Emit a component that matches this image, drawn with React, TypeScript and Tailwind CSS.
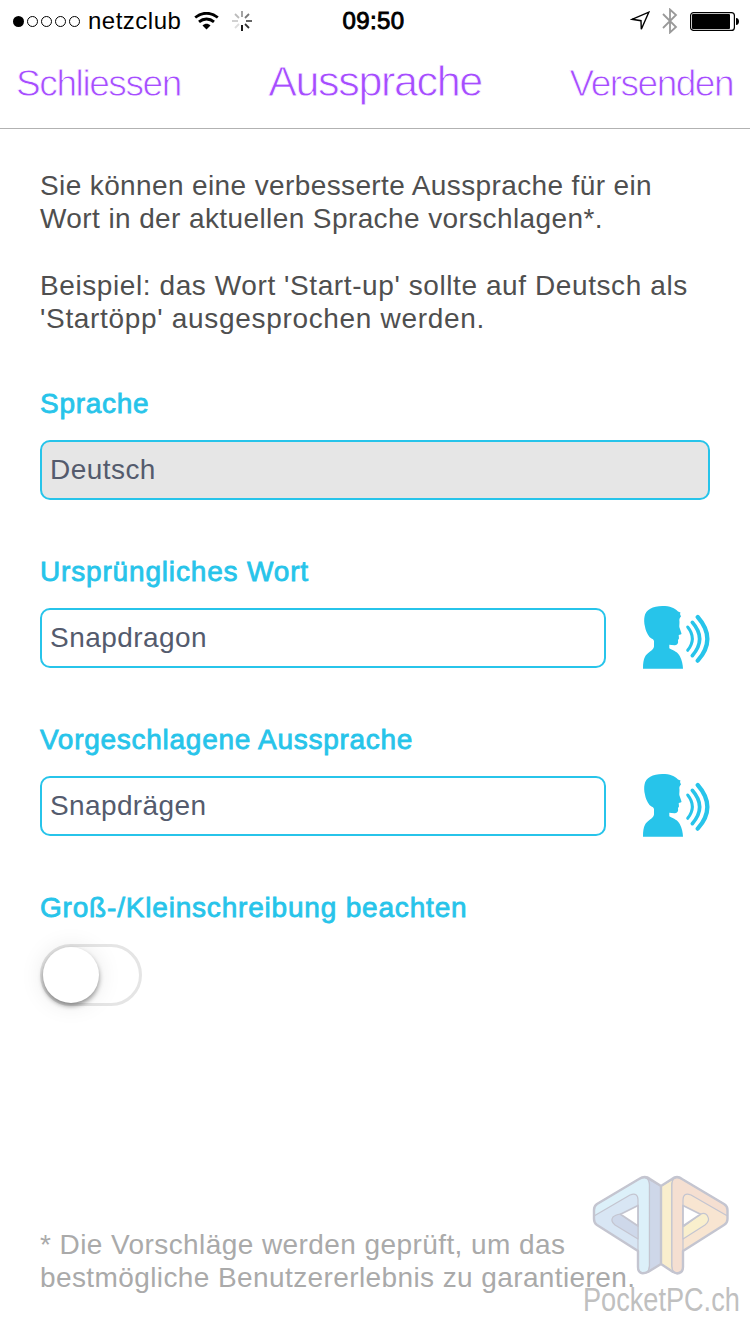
import type { ReactNode } from 'react';

const labelStyle =
  "block h-[34px] whitespace-nowrap text-[28px] leading-[34px] text-[#27c4ea] [-webkit-text-stroke:0.8px_#27c4ea]";

function StatusBar() {
  return (
    <div className="grid h-10 grid-cols-3 items-center pl-3 pr-[11px] text-black">
      <div className="flex items-center">
        <svg className="h-5 w-[70px]" viewBox="0 0 70 20" fill="none" stroke="#000">
          <circle cx="6.5" cy="10.5" r="5.5" fill="#000" stroke="none" />
          <circle cx="20.5" cy="10.5" r="5" />
          <circle cx="34.5" cy="10.5" r="5" />
          <circle cx="48.5" cy="10.5" r="5" />
          <circle cx="62.5" cy="10.5" r="5" />
        </svg>
        <span className="ml-[6px] w-[96px] text-[24px] leading-10 tracking-[0.500px]">netzclub</span>
        <svg className="ml-[10px] h-[18px] w-[26px] shrink-0" viewBox="0 0 26 18" fill="none" stroke="#000">
          <path d="M1.200 5.500C8 -.2 17 -.2 23.800 5.500" strokeWidth="2.800" />
          <path d="M5 9.900C9.500 6 15.500 6 20 9.900" strokeWidth="2.800" />
          <path d="M8.500 13.500C11 11.300 14 11.300 16.500 13.500L12.500 17.500Z" fill="#000" stroke="none" />
        </svg>
        <svg className="ml-3 h-5 w-5 shrink-0" viewBox="0 0 20 20" fill="none" strokeWidth="1.800">
          <path d="M10 0v6" stroke="#999" />
          <path d="M17 3l-4 4" stroke="#777" />
          <path d="M20 10h-6" stroke="#555" />
          <path d="M17 17l-4-4" stroke="#333" />
          <path d="M10 20v-6" stroke="#000" />
          <path d="M3 17l4-4" stroke="#ddd" />
          <path d="M0 10h6" stroke="#ccc" />
          <path d="M3 3l4 4" stroke="#bbb" />
        </svg>
      </div>
      <div className="pr-1 pt-px text-center text-[24px] leading-10 tracking-[0.4px] [-webkit-text-stroke:0.9px_#000]">09:50</div>
      <div className="flex items-center justify-end">
        <svg className="h-5 w-5" viewBox="0 0 20 20" fill="none" stroke="#000" strokeWidth="1.400">
          <path d="M18.800 1.200L11.300 18.200L11 9.700L2 8.300Z" />
        </svg>
        <svg className="ml-3 h-[26px] w-4" viewBox="0 0 16 26" fill="none" stroke="#999" strokeWidth="1.800">
          <path d="M1 6L14 19L8 24.500V1.500L14 7L1 20" />
        </svg>
        <svg className="ml-3 h-5 w-[49px]" viewBox="0 0 49 20">
          <rect x="0.600" y="1.600" width="43.800" height="17.800" rx="3" fill="none" stroke="#000" strokeWidth="1.200" />
          <rect x="2" y="3" width="38" height="15" rx="1" />
          <path d="M46 7c4 0 4 7 0 7z" />
        </svg>
      </div>
    </div>
  );
}

function SpeakIcon() {
  return (
    <svg className="h-[66px] w-[70px] shrink-0" viewBox="0 0 70 66" fill="none" stroke="#27c4ea" strokeLinecap="round">
      <path
        d="M3 64.700C3 59 3.500 55.500 5 52.700C7 48.500 13.500 46.500 14 42.500V37C13.500 34.500 10.500 34.500 9.300 32.700C7 29.500 5.500 26 5 22.700C4 19 4 15 4.500 12.700C5.500 5.500 13 2 22.300 2C30 2 35 4 38 7.500L40.500 8.500L40 10L41 12.500C40 13.500 39.500 14.500 39.300 16C39.800 18.500 39.200 20.500 39.300 23L41.500 29.500C41.500 30.500 40 30.800 38.700 31L39 34.500L38 36C38.500 39.500 37.500 41 35 41.200C33 41.300 31 40.700 29.300 40.700V44.300C34 47 38 48 40 52.500C42 56.500 42.800 60.500 43 64.700Z"
        fill="#27c4ea"
        stroke="none"
      />
      <path d="M47.700 23Q57 34.700 47.700 46.300" strokeWidth="3" />
      <path d="M52.300 18.300Q67 35 52.300 51.700" strokeWidth="3.600" />
      <path d="M57.700 13Q77 35 57.700 56.700" strokeWidth="4.200" />
    </svg>
  );
}

type FieldProps = {
  label: string;
  value: string;
  labelTracking: string;
  valueTracking: string;
  disabled?: boolean;
};

function Field({ label, value, labelTracking, valueTracking, disabled }: FieldProps) {
  return (
    <div className="h-[168px]">
      <label className={`${labelStyle} ${labelTracking}`}>{label}</label>
      <div className="mt-[19px] flex h-[60px] items-center">
        <div
          className={`flex h-[60px] flex-1 items-center rounded-[10px] border-2 border-[#27c4ea] pl-2 text-[28px] text-[#545b6d] ${
            disabled ? 'bg-[#e6e6e6]' : 'bg-white'
          }`}
        >
          <span className={valueTracking}>{value}</span>
        </div>
        {!disabled && (
          <button className="ml-[34px] -mt-[2px]" aria-label="Anhören">
            <SpeakIcon />
          </button>
        )}
      </div>
    </div>
  );
}

function Line({ children, className }: { children: ReactNode; className: string }) {
  return <span className={`block whitespace-nowrap ${className}`}>{children}</span>;
}

function Watermark() {
  return (
    <div className="absolute left-[583px] top-[1174px] w-[160px]">
      <svg className="ml-[9px] h-[102px] w-[138px]" viewBox="0 0 138 102" strokeLinejoin="round" strokeWidth="1.200" stroke="#c4c5d0">
        {/* left half */}
        <path d="M46 20V5L5 30Q2 32 2 36V45Q2 49 5 51L46 77Z" fill="#d8e6f4" stroke="none" />
        <path d="M2 42V36Q2 32 5 30L47 5Q57 1 57.500 10V92Q57 99 51.500 99Q46 98 46 93V26Q46 18 38 21Z" fill="#dcf0f9" />
        <path d="M28.500 40L46 52V65L23 51Q18 47 21 43Q23 41 28.500 40Z" fill="#ced8ea" />
        <path d="M54 4L69 12V90L54 99Q57.500 97 57.500 92V11Q57.500 6 54 4Z" fill="#ced7e9" />
        {/* right half */}
        <path d="M91 20V5L132 30Q135.500 32 135.500 36V45Q135.500 49 132 51L91 77Z" fill="#f8e5d1" stroke="none" />
        <path d="M135.500 42V36Q135.500 32 132 30L90 5Q80 1 79.700 10V92Q80 99 85.500 99Q91 98 91 93V26Q91 18 99 21Z" fill="#f5dfd1" />
        <path d="M91 53L108.500 40Q114 38 116 43Q118 47 113 51L91 65Z" fill="#f9efcd" />
        <path d="M83 4L69 12V90L83 99Q79.700 97 79.700 92V11Q79.700 6 83 4Z" fill="#f9eecd" />
        <path d="M46 31.500L28.500 40.300L46 52ZM91 31.500L108.500 40.300L91 52Z" fill="#fff" strokeWidth="1.800" />
        <path
          d="M2 36Q2 32 5 30L47 5Q53 1 58 5L69 12L80 5Q85 1 90 5L132 30Q135.500 32 135.500 36V45Q135.500 49 132 51L91 77V93Q91 99 85 99.500L81 98L69 90L56 98Q46 102 46 93V77L5 51Q2 49 2 45ZM69 12V90"
          fill="none"
          strokeWidth="2.400"
        />
      </svg>
      <div className="h-10 origin-left scale-x-[0.822] whitespace-nowrap text-[33px] leading-[48px] text-[#c0c0c0]">PocketPC.ch</div>
    </div>
  );
}

export default function App() {
  return (
    <div className="relative h-[1334px] w-[750px] overflow-hidden bg-white font-['Liberation_Sans',Arial,sans-serif]">
      <StatusBar />
      <header className="grid h-[89px] grid-cols-[1fr_auto_1fr] items-center border-b border-[#b2b2b2] px-4 text-[#a64dff] [-webkit-text-stroke:0.8px_#fff]">
        <button className="whitespace-nowrap text-left text-[37px] leading-[86px] tracking-[-1.400px]">Schliessen</button>
        <h1 className="-mt-1.5 whitespace-nowrap text-[43px] leading-[82px] tracking-[-1.350px]">Aussprache</h1>
        <button className="whitespace-nowrap pr-px text-right text-[37px] leading-[86px] tracking-[-1.500px]">Versenden</button>
      </header>

      <main className="px-10 pt-[40px]">
        <p className="text-[28px] leading-[33px] text-[#4f4f4f]">
          <Line className="tracking-[0.380px]">Sie können eine verbesserte Aussprache für ein</Line>
          <Line className="tracking-[0.400px]">Wort in der aktuellen Sprache vorschlagen*.</Line>
        </p>
        <p className="mt-[34px] text-[28px] leading-[33px] text-[#4f4f4f]">
          <Line className="tracking-[0.590px]">Beispiel: das Wort 'Start-up' sollte auf Deutsch als</Line>
          <Line className="tracking-[0.680px]">'Startöpp' ausgesprochen werden.</Line>
        </p>

        <div className="mt-[52px]">
          <Field label="Sprache" value="Deutsch" labelTracking="tracking-[0.700px]" valueTracking="tracking-[0.450px]" disabled />
          <Field label="Ursprüngliches Wort" value="Snapdragon" labelTracking="tracking-[0.830px]" valueTracking="tracking-[0.450px]" />
          <Field label="Vorgeschlagene Aussprache" value="Snapdrägen" labelTracking="tracking-[0.730px]" valueTracking="tracking-[0.380px]" />
          <span className={`${labelStyle} tracking-[0.810px]`}>Groß-/Kleinschreibung beachten</span>
          <div className="mt-[19px] h-[62px] w-[102px] rounded-full border-[3px] border-[#e5e5e5]">
            <div className="h-14 w-14 rounded-full bg-white shadow-[0_3px_5px_rgba(0,0,0,0.4),0_1px_24px_rgba(0,0,0,0.1)]" />
          </div>
        </div>
      </main>

      <footer className="mt-[222px] px-10 text-[28px] leading-[33px] text-[#aaa]">
        <Line className="tracking-[0.420px]">* Die Vorschläge werden geprüft, um das</Line>
        <Line className="tracking-[0.400px]">bestmögliche Benutzererlebnis zu garantieren.</Line>
      </footer>
      <Watermark />
    </div>
  );
}
